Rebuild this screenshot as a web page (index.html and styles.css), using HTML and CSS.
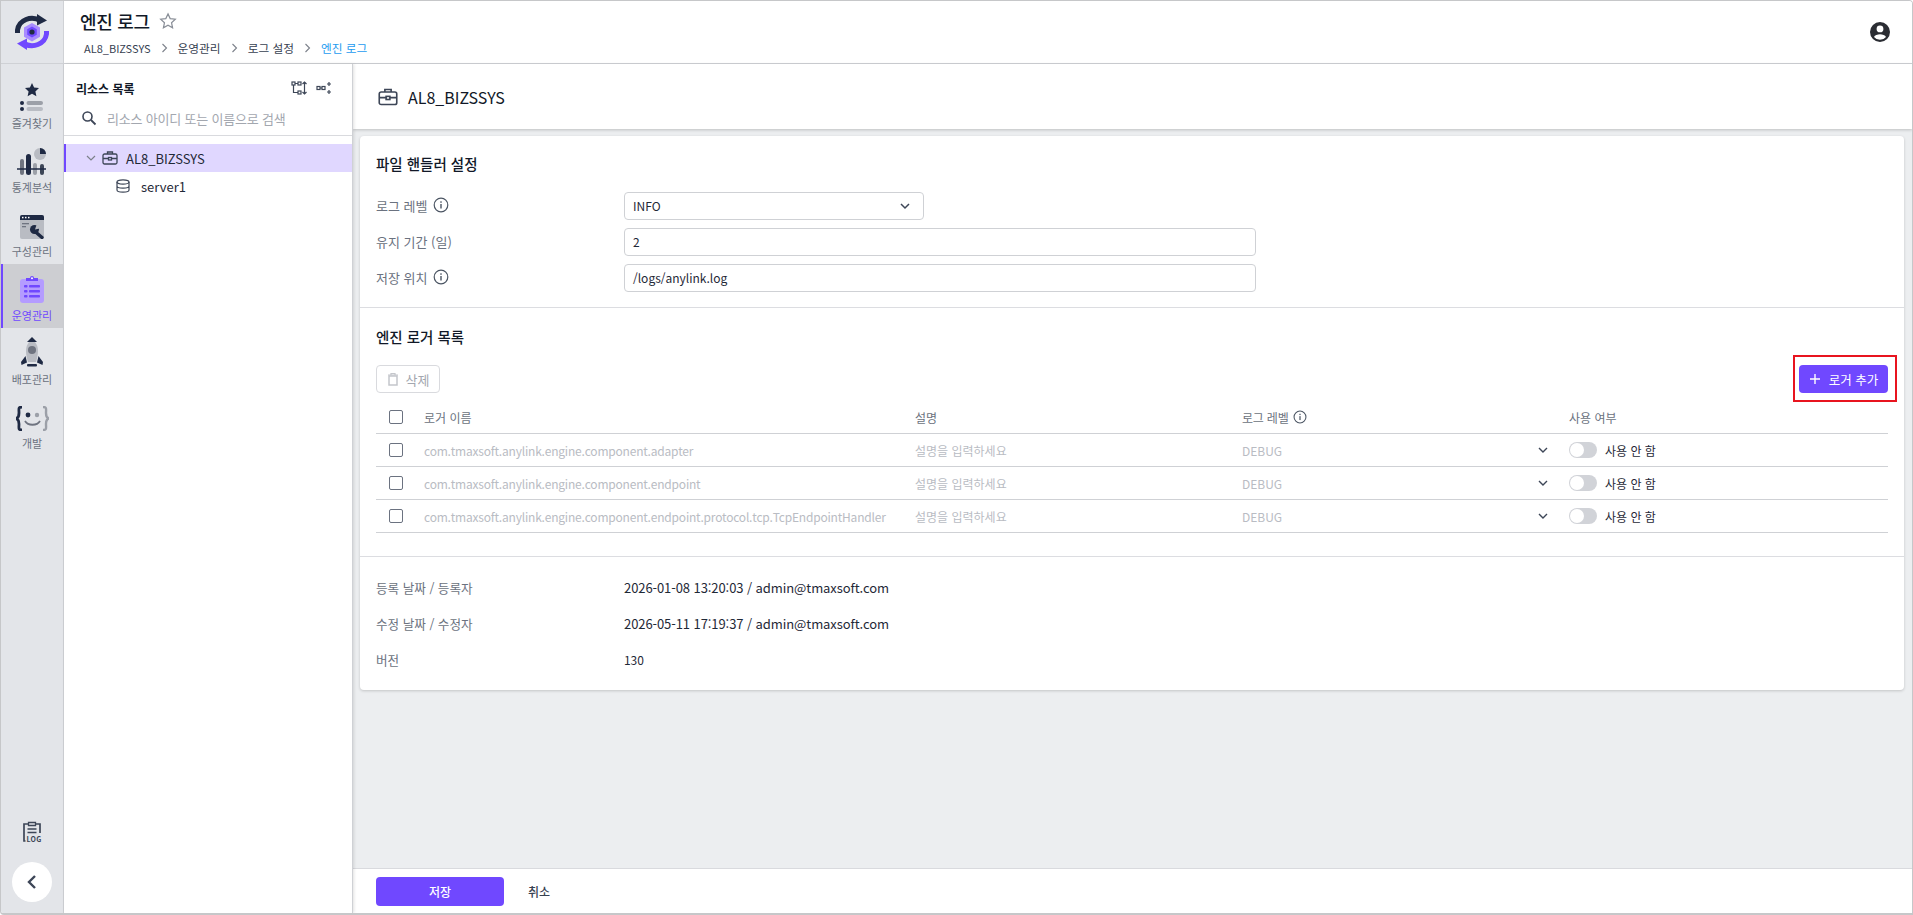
FILE: index.html
```html
<!DOCTYPE html>
<html lang="ko">
<head>
<meta charset="utf-8">
<title>엔진 로그</title>
<link rel="stylesheet" href="styles.css">
</head>
<body>
<div class="window">
  <aside class="rail">
    <div class="logo">
      <svg width="36" height="36" viewBox="0 0 36 36"><path d="M3.500 19V16C5 6 17 1 27 7" fill="none" stroke="#1f2a44" stroke-width="5"/><path d="M23 0l10 6.500-10 5z" fill="#1f2a44"/><path d="M32.500 17v3C31 30 19 35 9 29" fill="none" stroke="#7048ff" stroke-width="5"/><path d="M13 36L3 29.500l10-5z" fill="#7048ff"/><path d="M18 9l8 4.600v9.200L18 27.400l-8-4.600v-9.200z" fill="#a98cff"/><path d="M18 12.500l4.800 2.800v5.500L18 23.500l-4.800-2.700v-5.500z" fill="#7048ff"/><circle cx="18" cy="18" r="2.600" fill="#1f2a44"/></svg>
    </div>
    <nav class="rail-nav">
      <a class="rail-item">
        <svg width="26" height="28" viewBox="0 0 26 28"><path d="M13 0l2.100 4.500 4.900.6-3.600 3.300 1 4.800L13 10.800l-4.400 2.400 1-4.800L6 5.100l4.900-.6z" fill="#1f2a44"/><circle cx="3" cy="20" r="2" fill="#1f2a44"/><circle cx="3" cy="26" r="2" fill="#1f2a44"/><rect x="7.500" y="18" width="16.500" height="4" rx="2" fill="#9ca0a8"/><rect x="7.500" y="24" width="16.500" height="4" rx="2" fill="#b9bcc3"/></svg>
        <span>즐겨찾기</span>
      </a>
      <a class="rail-item">
        <svg width="30" height="27" viewBox="0 0 30 27"><circle cx="23" cy="6" r="6" fill="#b9bcc3"/><path d="M23 0a6 6 0 0 1 6 6h-6z" fill="#1f2a44"/><rect x="3" y="11" width="4" height="16" rx="2" fill="#6f7480"/><rect x="9" y="6" width="5" height="21" rx="2.500" fill="#1f2a44"/><rect x="16" y="15" width="4" height="12" rx="2" fill="#9ca0a8"/><rect x="23" y="16" width="4" height="11" rx="2" fill="#3d4657"/><path d="M0 21h29" stroke="#1f2a44" stroke-width="1.300"/></svg>
        <span>통계분석</span>
      </a>
      <a class="rail-item">
        <svg width="24" height="24" viewBox="0 0 24 24"><rect width="24" height="24" rx="2" fill="#b9bcc3"/><path d="M2 0h20a2 2 0 0 1 2 2v3H0V2a2 2 0 0 1 2-2z" fill="#1f2a44"/><rect x="2" y="1.800" width="1.500" height="1.500" fill="#fff"/><rect x="5" y="1.800" width="1.500" height="1.500" fill="#fff"/><rect x="8" y="1.800" width="1.500" height="1.500" fill="#fff"/><rect x="2" y="8" width="7" height="1.300" fill="#6f7480"/><rect x="2" y="11" width="4" height="1.300" fill="#6f7480"/><path d="M15 16.500l7 6" stroke="#1f2a44" stroke-width="3.400" stroke-linecap="round"/><circle cx="14.500" cy="14.500" r="4.500" fill="#1f2a44"/><path d="M15 14.500l2-6 5 4.500z" fill="#b9bcc3"/></svg>
        <span>구성관리</span>
      </a>
      <a class="rail-item active">
        <svg width="24" height="28" viewBox="0 0 24 28"><rect y="4" width="24" height="24" rx="3" fill="#b49cff"/><path d="M6 6V3h4a2 2 0 0 1 4 0h4v3z" fill="#7048ff"/><circle cx="12" cy="3.200" r="1" fill="#fff"/><g fill="#7048ff"><rect x="4" y="10" width="3.500" height="2.500" rx=".8"/><rect x="9" y="10" width="11" height="2.500" rx=".8"/><rect x="4" y="15" width="3.500" height="2.500" rx=".8"/><rect x="9" y="15" width="11" height="2.500" rx=".8"/><rect x="4" y="20" width="3.500" height="2.500" rx=".8"/><rect x="9" y="20" width="11" height="2.500" rx=".8"/></g></svg>
        <span>운영관리</span>
      </a>
      <a class="rail-item">
        <svg width="24" height="30" viewBox="0 0 24 30"><path d="M12 3c4 2 6 6 6 11 0 4-1 8-2 11H8c-1-3-2-7-2-11 0-5 2-9 6-11z" fill="#b9bcc3"/><path d="M12 0l5 5H7z" fill="#1f2a44"/><circle cx="12" cy="13" r="4" fill="#6f7480"/><path d="M5.500 19L1 25l.5 3L7 25.500zM18.500 19L23 25l-.5 3L17 25.500z" fill="#1f2a44"/><rect x="7" y="27" width="10" height="2.500" rx="1" fill="#1f2a44"/></svg>
        <span>배포관리</span>
      </a>
      <a class="rail-item">
        <svg width="33" height="25" viewBox="0 0 33 25"><path d="M6 1C2 1 3 3 3 7c0 4-1 5-3 5.500C2 13 3 14 3 18c0 4-1 6 3 6" fill="none" stroke="#1f2a44" stroke-width="2.800"/><path d="M27 1c4 0 3 2 3 6 0 4 1 5 3 5.500-2 .5-3 1.500-3 5.500 0 4 1 6-3 6" fill="none" stroke="#9ca0a8" stroke-width="2.400"/><circle cx="12" cy="9" r="2.400" fill="#1f2a44"/><circle cx="21" cy="9" r="2.200" fill="#9ca0a8"/><path d="M9 15c3 5 12 5 15 0" fill="none" stroke="#6f7480" stroke-width="1.800"/></svg>
        <span>개발</span>
      </a>
    </nav>
    <div class="rail-bottom">
      <svg width="20" height="21" viewBox="0 0 20 21"><path d="M6 3H2v17h1.500M14 3h4v9" fill="none" stroke="#3d4657" stroke-width="1.700"/><path d="M6.500 1.500h7v3h-7z" fill="none" stroke="#3d4657" stroke-width="1.300"/><path d="M5.500 8h9M5.500 11.500h9" stroke="#3d4657" stroke-width="1.500"/><text class="log-mark" x="12" y="20.500">LOG</text></svg>
      <button class="collapse" type="button"><svg width="12" height="16" viewBox="0 0 12 16"><path d="M9 2L3 8l6 6" fill="none" stroke="#3d4657" stroke-width="2.400"/></svg></button>
    </div>
  </aside>

  <div class="content">
    <header class="topbar">
      <div>
        <div class="title-row">
          <h1>엔진 로그</h1>
          <svg class="star" width="18" height="18" viewBox="0 0 24 24"><path d="M12 2.500l2.900 6.300 6.900.8-5.100 4.700 1.400 6.800L12 17.700l-6.100 3.400 1.400-6.800L2.200 9.600l6.900-.8z" fill="none" stroke="#8a8f98" stroke-width="1.600"/></svg>
        </div>
        <ol class="crumbs">
          <li class="latin">AL8_BIZSSYS</li><li class="sep"><svg width="7" height="10" viewBox="0 0 7 10"><path d="M1.500 1l4 4-4 4" fill="none" stroke="#7c818a" stroke-width="1.100"/></svg></li>
          <li>운영관리</li><li class="sep"><svg width="7" height="10" viewBox="0 0 7 10"><path d="M1.500 1l4 4-4 4" fill="none" stroke="#7c818a" stroke-width="1.100"/></svg></li>
          <li>로그 설정</li><li class="sep"><svg width="7" height="10" viewBox="0 0 7 10"><path d="M1.500 1l4 4-4 4" fill="none" stroke="#7c818a" stroke-width="1.100"/></svg></li>
          <li class="current">엔진 로그</li>
        </ol>
      </div>
      <svg width="24" height="24" viewBox="0 0 24 24"><path d="M12 2a10 10 0 1 0 0 20 10 10 0 0 0 0-20zm0 3.500a3.400 3.400 0 1 1 0 6.800 3.400 3.400 0 0 1 0-6.800zm0 14.300a7.800 7.800 0 0 1-6-2.900c.7-1.700 3.600-2.700 6-2.700s5.300 1 6 2.700a7.800 7.800 0 0 1-6 2.900z" fill="#2b2d33"/></svg>
    </header>

    <div class="body">
      <section class="tree">
        <div class="tree-head">
          <div class="tree-title">
            <h2>리소스 목록</h2>
            <div class="tree-tools">
              <svg width="16" height="16" viewBox="0 0 16 16"><g fill="none" stroke="#3d4657" stroke-width="1.200"><rect x="1" y="2" width="3" height="3"/><rect x="7" y="2" width="3" height="3"/><rect x="7" y="11" width="3" height="3"/><path d="M4 3.500h3M2.500 5v7.500H7"/><path d="M13.500 2v12M11.500 4l2-2 2 2M11.500 12l2 2 2-2"/></g></svg>
              <svg width="16" height="16" viewBox="0 0 16 16"><g fill="none" stroke="#3d4657" stroke-width="1.200"><rect x="1" y="6.500" width="3" height="3"/><rect x="6" y="6.500" width="3" height="3"/><path d="M4 8h2M13 2v4M11 4h4M13 10v4M11 12h4"/></g></svg>
            </div>
          </div>
          <div class="tree-search">
            <svg width="16" height="16" viewBox="0 0 16 16"><circle cx="6.500" cy="6.500" r="4.500" fill="none" stroke="#3d4657" stroke-width="1.600"/><path d="M10 10l4.500 4.500" stroke="#3d4657" stroke-width="1.800"/></svg>
            <span>리소스 아이디 또는 이름으로 검색</span>
          </div>
        </div>
        <ul class="tree-list">
          <li class="node selected">
            <svg width="10" height="10" viewBox="0 0 10 10"><path d="M1 3l4 4 4-4" fill="none" stroke="#7c818a" stroke-width="1.200"/></svg>
            <svg class="case" width="16" height="16" viewBox="0 0 16 16"><g fill="none" stroke="#3d4657" stroke-width="1.300"><rect x="1" y="4" width="14" height="10" rx="1.500"/><path d="M5.500 4V2h5v2M1 8.500h14"/><rect x="6.500" y="7.500" width="3" height="2.500" fill="#e0d7ff"/></g></svg>
            <span>AL8_BIZSSYS</span>
          </li>
          <li class="node child">
            <svg width="14" height="14" viewBox="0 0 14 14"><g fill="none" stroke="#3d4657" stroke-width="1.200"><ellipse cx="7" cy="3" rx="6" ry="2.200"/><path d="M1 3v8c0 1.200 2.700 2.200 6 2.200s6-1 6-2.200V3M1 7c0 1.200 2.700 2.200 6 2.200S13 8.200 13 7"/></g></svg>
            <span>server1</span>
          </li>
        </ul>
      </section>

      <main class="main">
        <div class="main-head">
          <svg width="20" height="20" viewBox="0 0 16 16"><g fill="none" stroke="#3d4657" stroke-width="1.300"><rect x="1" y="4" width="14" height="10" rx="1.500"/><path d="M5.500 4V2h5v2M1 8.500h14"/><rect x="6.500" y="7.500" width="3" height="2.500" fill="#fff"/></g></svg>
          <span>AL8_BIZSSYS</span>
        </div>
        <div class="scroll">
          <div class="card">
            <section class="sec sec-file">
              <h3>파일 핸들러 설정</h3>
              <div class="field">
                <label>로그 레벨<svg class="info" width="16" height="16" viewBox="0 0 16 16"><use href="#i-info"/></svg></label>
                <div class="input select"><span>INFO</span><svg width="12" height="12" viewBox="0 0 12 12"><path d="M2 4l4 4 4-4" fill="none" stroke="#3d4657" stroke-width="1.500"/></svg></div>
              </div>
              <div class="field">
                <label>유지 기간 (일)</label>
                <div class="input">2</div>
              </div>
              <div class="field">
                <label>저장 위치<svg class="info" width="16" height="16" viewBox="0 0 16 16"><use href="#i-info"/></svg></label>
                <div class="input">/logs/anylink.log</div>
              </div>
            </section>

            <section class="sec sec-log">
              <h3>엔진 로거 목록</h3>
              <div class="toolbar">
                <button class="btn-del" type="button"><svg width="12" height="14" viewBox="0 0 12 14"><path d="M1 3h10M4 3V1.500h4V3" fill="none" stroke="#c4c6cb" stroke-width="1.200"/><rect x="2" y="4" width="8" height="9" fill="none" stroke="#c4c6cb" stroke-width="1.500"/></svg>삭제</button>
                <div class="add-wrap">
                  <button class="btn-add" type="button"><svg width="12" height="12" viewBox="0 0 12 12"><path d="M6 1v10M1 6h10" stroke="#fff" stroke-width="1.400"/></svg>로거 추가</button>
                </div>
              </div>
              <div class="table">
                <div class="tr th">
                  <span class="cb"></span><span>로거 이름</span><span>설명</span>
                  <span class="th-level">로그 레벨<svg class="info small" width="14" height="14" viewBox="0 0 16 16"><use href="#i-info"/></svg></span>
                  <span>사용 여부</span>
                </div>
                <div class="tr">
                  <span class="cb"></span><span class="muted name">com.tmaxsoft.anylink.engine.component.adapter</span><span class="muted">설명을 입력하세요</span>
                  <span class="level"><span class="muted">DEBUG</span><svg width="10" height="10" viewBox="0 0 10 10"><path d="M1 3l4 4 4-4" fill="none" stroke="#3d4657" stroke-width="1.400"/></svg></span>
                  <span class="use"><i class="toggle"></i>사용 안 함</span>
                </div>
                <div class="tr">
                  <span class="cb"></span><span class="muted name">com.tmaxsoft.anylink.engine.component.endpoint</span><span class="muted">설명을 입력하세요</span>
                  <span class="level"><span class="muted">DEBUG</span><svg width="10" height="10" viewBox="0 0 10 10"><path d="M1 3l4 4 4-4" fill="none" stroke="#3d4657" stroke-width="1.400"/></svg></span>
                  <span class="use"><i class="toggle"></i>사용 안 함</span>
                </div>
                <div class="tr">
                  <span class="cb"></span><span class="muted name">com.tmaxsoft.anylink.engine.component.endpoint.protocol.tcp.TcpEndpointHandler</span><span class="muted">설명을 입력하세요</span>
                  <span class="level"><span class="muted">DEBUG</span><svg width="10" height="10" viewBox="0 0 10 10"><path d="M1 3l4 4 4-4" fill="none" stroke="#3d4657" stroke-width="1.400"/></svg></span>
                  <span class="use"><i class="toggle"></i>사용 안 함</span>
                </div>
              </div>
            </section>

            <section class="sec sec-meta">
              <div class="meta"><label>등록 날짜 / 등록자</label><span>2026-01-08 13:20:03 / admin@tmaxsoft.com</span></div>
              <div class="meta"><label>수정 날짜 / 수정자</label><span>2026-05-11 17:19:37 / admin@tmaxsoft.com</span></div>
              <div class="meta"><label>버전</label><span class="ver">130</span></div>
            </section>
          </div>
        </div>
        <footer class="footer">
          <button class="btn-save" type="button">저장</button>
          <button class="btn-cancel" type="button">취소</button>
        </footer>
      </main>
    </div>
  </div>
</div>
<svg class="defs" width="0" height="0"><defs><g id="i-info"><circle cx="8" cy="8" r="6.800" fill="none" stroke="#4b5563" stroke-width="1.200"/><rect x="7.300" y="7" width="1.400" height="4.500" fill="#4b5563"/><rect x="7.300" y="4.300" width="1.400" height="1.500" fill="#4b5563"/></g></defs></svg>
</body>
</html>
```

FILE: styles.css
```css
* { box-sizing: border-box; }
html, body { margin: 0; padding: 0; height: 100%; overflow: hidden; }
body { font-family: "Noto Sans CJK KR", "Noto Sans", sans-serif; color: #1f2937; background: #fff; font-size: 12px; }
h1, h2, h3, ul, ol { margin: 0; padding: 0; list-style: none; }
button { font-family: inherit; cursor: pointer; }
.defs { position: absolute; }

.window { display: flex; width: 1913px; height: 915px; border: 1px solid #c6c7c9; border-bottom-width: 2px; border-radius: 0 4px 0 4px; overflow: hidden; }

.rail { width: 63px; flex: none; background: #e3e5e9; border-right: 1px solid #cfd1d5; display: flex; flex-direction: column; }
.logo { height: 63px; display: flex; align-items: center; justify-content: center; border-bottom: 1px solid #cfd1d5; flex: none; }
.rail-nav { padding-top: 8px; display: flex; flex-direction: column; }
.rail-item { height: 64px; display: flex; flex-direction: column; align-items: center; justify-content: flex-end; padding-bottom: 5px; gap: 5px; color: #6b7280; font-size: 11px; line-height: 15px; }
.rail-item svg { flex: none; }
.rail-item.active { background: #cdced2; box-shadow: inset 2px 0 0 #7048ff; color: #7048ff; }
.rail-bottom { margin-top: auto; display: flex; flex-direction: column; align-items: center; gap: 20px; padding-bottom: 11px; }
.log-mark { font-size: 7px; font-weight: 700; fill: #3d4657; text-anchor: middle; letter-spacing: .3px; }
.collapse { width: 40px; height: 40px; border-radius: 50%; border: 0; background: #fff; display: flex; align-items: center; justify-content: center; padding: 0; }

.content { flex: 1; min-width: 0; display: flex; flex-direction: column; }
.topbar { height: 63px; flex: none; display: flex; justify-content: space-between; align-items: center; padding: 0 20px 0 16px; border-bottom: 1px solid #cfd1d5; background: #fff; }
.title-row { display: flex; align-items: center; gap: 9px; height: 28px; }
h1 { font-size: 18px; font-weight: 500; color: #111827; line-height: 28px; letter-spacing: -.3px; }
.crumbs { display: flex; align-items: center; margin: 4px 0 0 4px; font-size: 11.700px; line-height: 18px; color: #374151; }
.crumbs .latin { font-size: 11px; }
.crumbs .sep { display: flex; margin: 0 10px; }
.crumbs .current { color: #1d9bf0; }

.body { flex: 1; display: flex; min-height: 0; }
.tree { width: 289px; flex: none; background: #fff; border-right: 1px solid #cfd1d5; box-shadow: 1px 0 3px rgba(0,0,0,.12); position: relative; z-index: 2; }
.tree-head { height: 72px; border-bottom: 1px solid #d9dade; padding: 12px 20px 0 12px; }
.tree-title { display: flex; justify-content: space-between; align-items: center; height: 24px; }
h2 { font-size: 12px; font-weight: 700; color: #111827; }
.tree-tools { display: flex; gap: 9px; }
.tree-search { display: flex; align-items: center; gap: 10px; margin-top: 6px; height: 24px; padding-left: 5px; color: #a3a7af; font-size: 13px; letter-spacing: -.2px; }
.tree-list { padding-top: 8px; }
.node { height: 28px; display: flex; align-items: center; font-size: 13px; color: #1f2937; }
.node.selected { background: #e0d7ff; border-left: 2px solid #7048ff; padding-left: 20px; gap: 6px; }
.node.selected span { margin-left: 2px; }
.node.child { padding-left: 52px; gap: 11px; }

.main { flex: 1; min-width: 0; display: flex; flex-direction: column; background: #eceef0; }
.main-head { height: 65px; flex: none; background: #fff; box-shadow: 0 1px 3px rgba(0,0,0,.2); display: flex; align-items: center; gap: 10px; padding-left: 25px; font-size: 16px; color: #111827; position: relative; }
.scroll { flex: 1; min-height: 0; padding: 7px 8px 0 7px; }
.card { background: #fff; border-radius: 4px; box-shadow: 0 1px 3px rgba(0,0,0,.18); height: 554px; }
.sec { padding: 0 16px; border-bottom: 1px solid #dcdde1; }
.sec:last-child { border-bottom: 0; }
h3 { font-size: 14.500px; font-weight: 500; color: #111827; line-height: 22px; }
.sec-file { height: 172px; padding-top: 17px; }
.sec-file h3 { margin-bottom: 17px; }
.field { display: flex; align-items: center; height: 28px; margin-bottom: 8px; }
.field label, .meta label { width: 248px; flex: none; color: #6b7280; font-size: 13px; display: flex; align-items: center; gap: 6px; }
.field label { padding-bottom: 2px; }
.input { width: 632px; height: 28px; border: 1px solid #cfd1d5; border-radius: 4px; padding: 0 8px; font-size: 12px; line-height: 26px; color: #1f2937; }
.select { width: 300px; display: flex; justify-content: space-between; align-items: center; padding-right: 12px; }

.sec-log { height: 249px; padding-top: 18px; }
.toolbar { display: flex; justify-content: space-between; align-items: center; margin-top: 17px; height: 28px; }
.btn-del { width: 64px; height: 28px; border: 1px solid #d9dade; border-radius: 4px; background: #fff; color: #a3a7af; font-size: 13px; display: flex; align-items: center; justify-content: center; gap: 7px; padding: 0; }
.add-wrap { position: relative; }
.add-wrap::after { content: ""; position: absolute; left: -6px; right: -9px; top: -10px; bottom: -9px; border: 2px solid #e8141f; pointer-events: none; }
.btn-add { width: 89px; height: 28px; border: 0; border-radius: 4px; background: #7048ff; color: #fff; font-size: 12.500px; display: flex; align-items: center; justify-content: center; gap: 8px; padding: 0; }
.table { margin-top: 8px; }
.tr { display: grid; grid-template-columns: 48px 491px 327px 327px 318px; align-items: center; height: 33px; border-bottom: 1px solid #cfd1d5; font-size: 12px; color: #374151; }
.th { color: #6b7280; }
.cb { width: 14px; height: 14px; border: 1px solid #6b7280; border-radius: 2px; margin-left: 13px; }
.muted { color: #b9bcc3; }
.name { letter-spacing: -.2px; }
.level { display: flex; justify-content: space-between; align-items: center; padding-right: 21px; }
.th-level { display: flex; align-items: center; gap: 4px; letter-spacing: -.2px; }
.use { display: flex; align-items: center; font-size: 12px; color: #1f2937; }
.toggle { width: 28px; height: 16px; border-radius: 8px; background: #d1d3d8; margin-right: 8px; position: relative; }
.toggle::before { content: ""; position: absolute; left: 1px; top: 1px; width: 14px; height: 14px; border-radius: 50%; background: #fff; }

.sec-meta { padding-top: 12px; }
.meta { display: flex; align-items: center; height: 36px; font-size: 13px; color: #1f2937; letter-spacing: -.08px; }
.meta label { font-size: 12.600px; letter-spacing: 0; }
.ver { font-size: 12px; }

.footer { height: 45px; flex: none; background: #fff; border-top: 1px solid #d9dade; display: flex; align-items: center; padding-left: 23px; }
.btn-save { width: 128px; height: 29px; border: 0; border-radius: 4px; background: #7048ff; color: #fff; font-size: 12px; font-weight: 500; }
.btn-cancel { border: 0; background: none; color: #374151; font-size: 12px; font-weight: 500; margin-left: 24px; padding: 0; }
```
